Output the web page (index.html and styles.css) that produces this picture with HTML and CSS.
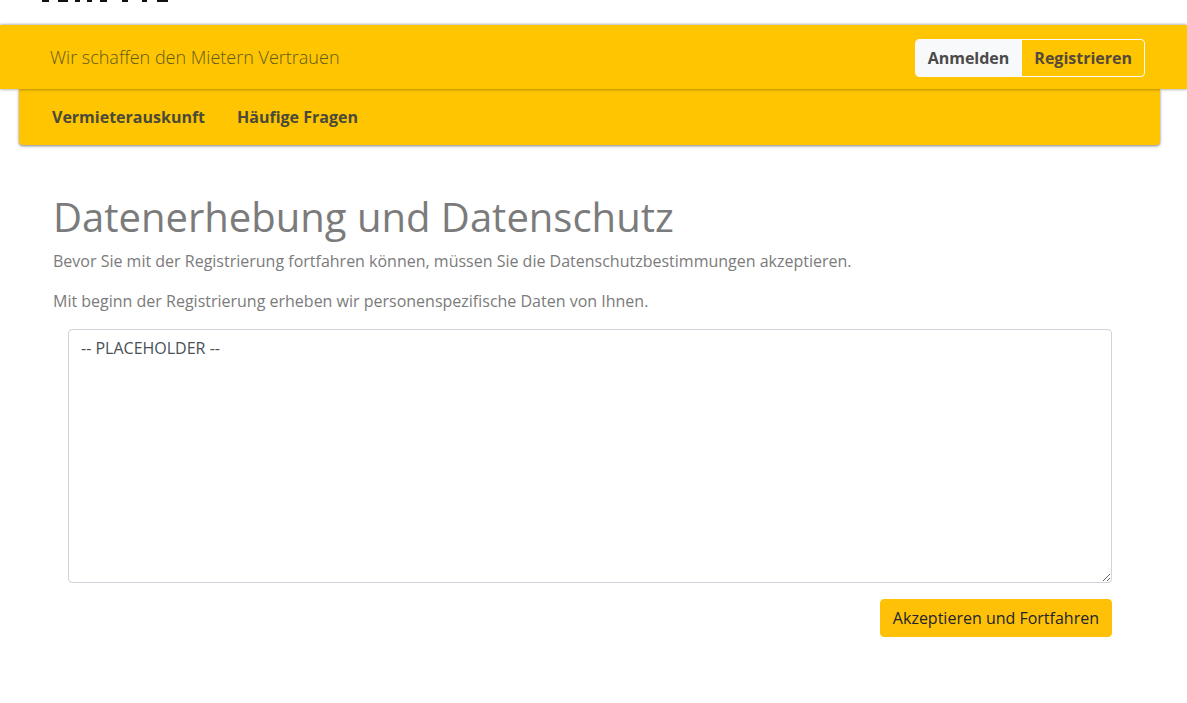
FILE: index.html
```html
<!DOCTYPE html>
<html lang="de">
<head>
    <meta charset="UTF-8">
    <meta name="viewport" content="width=device-width, initial-scale=1.0">
    <title>Datenerhebung und Datenschutz</title>
    <link rel="stylesheet" href="styles.css">
</head>
<body>
    <div class="logo-row">
        <svg class="logo" width="132" height="3" viewBox="0 0 132 3">
            <path d="M3 0h7v2H3zM19 0h10v2H19zM36 0h5v2h-5zM48 0h5v2h-5zM61 0h7v2h-7zM83 0h6v2h-6zM103 0h5v2h-5zM118 0h11v2h-11z" fill="#111"/>
        </svg>
    </div>
    <header class="topbar">
        <span class="slogan">Wir schaffen den Mietern Vertrauen</span>
        <div class="auth-group">
            <a class="auth-btn auth-login" href="#">Anmelden</a>
            <a class="auth-btn" href="#">Registrieren</a>
        </div>
    </header>
    <nav class="mainnav">
        <a href="#">Vermieterauskunft</a>
        <a href="#">Häufige Fragen</a>
    </nav>
    <main class="content">
        <h1>Datenerhebung und Datenschutz</h1>
        <p class="lead">Bevor Sie mit der Registrierung fortfahren können, müssen Sie die Datenschutzbestimmungen akzeptieren.</p>
        <p>Mit beginn der Registrierung erheben wir personenspezifische Daten von Ihnen.</p>
        <div class="form-box">
            <textarea class="terms" readonly>-- PLACEHOLDER --</textarea>
            <div class="form-actions">
                <button class="accept-btn" type="button">Akzeptieren und Fortfahren</button>
            </div>
        </div>
    </main>
</body>
</html>
```

FILE: styles.css
```css
body {
    font-family: 'Open Sans', sans-serif;
    font-size: 16px;
    color: #7b7b7b;
    background: #fff;
    margin: 0;
}
.logo-row {
    height: 25px;
    padding-left: 39px;
}
.logo {
    display: block;
}
.topbar {
    display: flex;
    align-items: center;
    justify-content: space-between;
    height: 64px;
    box-sizing: border-box;
    padding: 0 42px 0 50px;
    background: #ffc500;
    box-shadow: 0 0 3px rgba(0, 0, 0, 0.5);
    position: relative;
    z-index: 1;
}
.slogan {
    font-size: 18px;
    font-weight: 300;
    color: #5f5a1e;
}
.auth-group {
    display: flex;
    margin-top: 2px;
    border: 1px solid #f8f9fa;
    border-radius: 4px;
    overflow: hidden;
}
.auth-btn {
    padding: 6px 12px;
    line-height: 24px;
    font-weight: 700;
    color: #54493a;
    text-decoration: none;
}
.auth-login {
    padding-right: 13px;
    background: #f8f9fa;
    color: #4a4a4a;
}
.mainnav {
    display: flex;
    gap: 32px;
    height: 56px;
    box-sizing: border-box;
    margin: 0 27px 0 19px;
    padding: 0 33px;
    align-items: center;
    background: #ffc500;
    border-radius: 0 0 4px 4px;
    box-shadow: 0 1px 3px rgba(0, 0, 0, 0.5);
}
.mainnav a {
    font-weight: 700;
    color: #4a4a3a;
    text-decoration: none;
}
.content {
    padding: 48px 53px 0;
}
h1 {
    font-size: 40px;
    font-weight: 400;
    line-height: 48px;
    margin: 0 0 8px;
}
p {
    font-size: 16px;
    line-height: 24px;
    margin: 0 0 16px;
}
.form-box {
    padding: 0 22px 0 15px;
}
.terms {
    display: block;
    width: 100%;
    height: 254px;
    box-sizing: border-box;
    padding: 6px 12px;
    border: 1px solid #ced4da;
    border-radius: 4px;
    font-family: 'Open Sans', sans-serif;
    font-size: 16px;
    line-height: 24px;
    color: #495057;
    outline: none;
}
.form-actions {
    display: flex;
    justify-content: flex-end;
    margin-top: 16px;
}
.accept-btn {
    padding: 6px 12px;
    border: 1px solid #ffc107;
    border-radius: 4px;
    background: #ffc107;
    color: #212529;
    font-family: 'Open Sans', sans-serif;
    font-size: 16px;
    line-height: 24px;
}
```
